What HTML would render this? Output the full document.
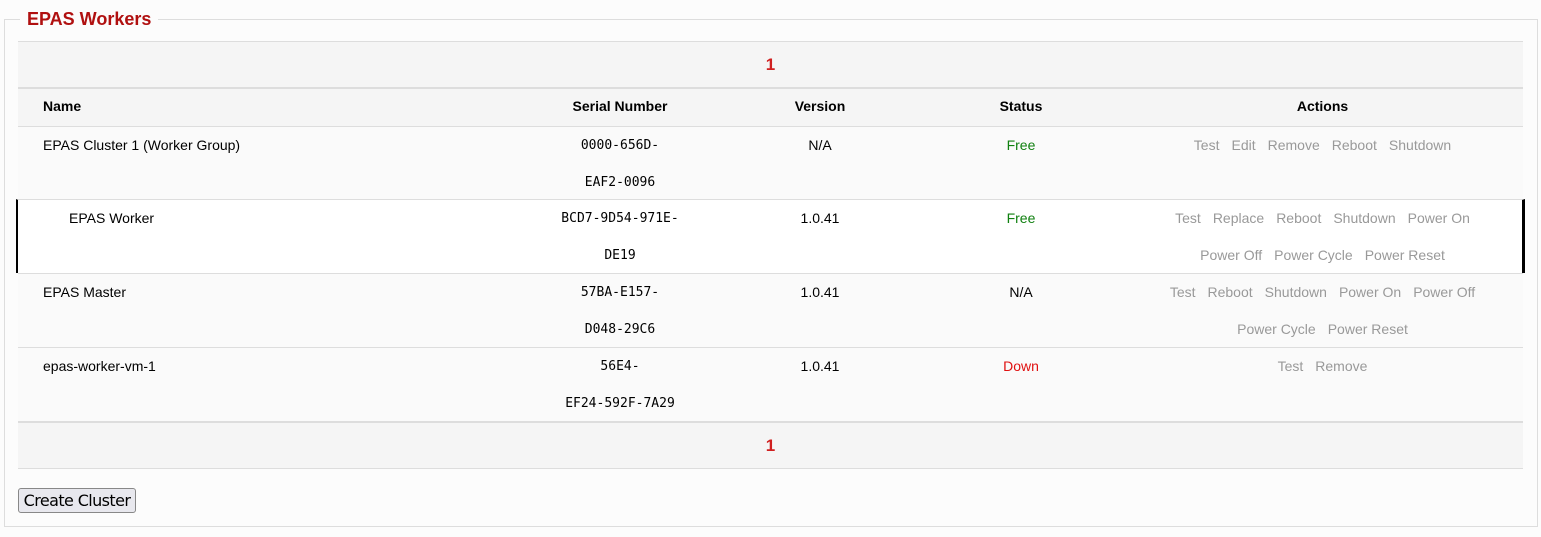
<!DOCTYPE html>
<html><head><style>
body{margin:0;background:#fcfcfc;font-family:"Liberation Sans",Arial,sans-serif;font-size:14px;color:#000;width:1541px;height:537px;position:relative;overflow:hidden}
.fs{position:absolute;left:4px;top:19px;width:1534px;height:508px;border:1px solid #ddd;box-sizing:border-box;background:#fcfcfc}
.lg{position:absolute;left:20px;top:9px;padding:0 7px;background:#fcfcfc;color:#b01010;font-weight:bold;font-size:18px;line-height:21px}
.r{position:absolute;left:18px;width:1505px;box-sizing:border-box}
.c{position:absolute;text-align:center;line-height:37px;top:0}
.mono{font-family:"DejaVu Sans Mono","Liberation Mono",monospace;font-size:13px}
.a{color:#999}
.a span{margin:0 6px}
.pg{color:#d02020;font-weight:bold;font-size:17px;text-align:center;line-height:46px}
</style></head><body>
<div class="fs"></div>
<div class="lg">EPAS Workers</div>

<div class="r pg" style="top:41px;height:47px;background:#f5f5f5;border-top:1px solid #ddd">1</div>
<div class="r" style="top:87px;height:39px;background:#f5f5f5;border-top:2px solid #ddd;font-weight:bold">
 <div class="c" style="left:25px;line-height:35px">Name</div>
 <div class="c" style="left:502px;width:200px;line-height:35px">Serial Number</div>
 <div class="c" style="left:702px;width:200px;line-height:35px">Version</div>
 <div class="c" style="left:902px;width:202px;line-height:35px">Status</div>
 <div class="c" style="left:1104px;width:401px;line-height:35px">Actions</div>
</div>

<div class="r" style="top:126px;height:73px;background:#fafafa;border-top:1px solid #ddd">
 <div class="c" style="left:25px">EPAS Cluster 1 (Worker Group)</div>
 <div class="c mono" style="left:502px;width:200px">0000-656D-<br>EAF2-0096</div>
 <div class="c" style="left:702px;width:200px">N/A</div>
 <div class="c" style="left:902px;width:202px;color:#108010">Free</div>
 <div class="c a" style="left:1104px;width:401px"><span>Test</span><span>Edit</span><span>Remove</span><span>Reboot</span><span>Shutdown</span></div>
</div>

<div class="r" style="top:199px;height:74px;background:#fff;border-top:1px solid #ddd;border-left:2px solid #000;border-right:3px solid #000;left:16px;width:1509px">
 <div class="c" style="left:51px">EPAS Worker</div>
 <div class="c mono" style="left:502px;width:200px">BCD7-9D54-971E-<br>DE19</div>
 <div class="c" style="left:702px;width:200px">1.0.41</div>
 <div class="c" style="left:902px;width:202px;color:#108010">Free</div>
 <div class="c a" style="left:1104px;width:401px"><span>Test</span><span>Replace</span><span>Reboot</span><span>Shutdown</span><span>Power On</span><br><span>Power Off</span><span>Power Cycle</span><span>Power Reset</span></div>
</div>

<div class="r" style="top:273px;height:74px;background:#fafafa;border-top:1px solid #ddd">
 <div class="c" style="left:25px">EPAS Master</div>
 <div class="c mono" style="left:502px;width:200px">57BA-E157-<br>D048-29C6</div>
 <div class="c" style="left:702px;width:200px">1.0.41</div>
 <div class="c" style="left:902px;width:202px">N/A</div>
 <div class="c a" style="left:1104px;width:401px"><span>Test</span><span>Reboot</span><span>Shutdown</span><span>Power On</span><span>Power Off</span><br><span>Power Cycle</span><span>Power Reset</span></div>
</div>

<div class="r" style="top:347px;height:74px;background:#fafafa;border-top:1px solid #ddd">
 <div class="c" style="left:25px">epas-worker-vm-1</div>
 <div class="c mono" style="left:502px;width:200px">56E4-<br>EF24-592F-7A29</div>
 <div class="c" style="left:702px;width:200px">1.0.41</div>
 <div class="c" style="left:902px;width:202px;color:#e01010">Down</div>
 <div class="c a" style="left:1104px;width:401px"><span>Test</span><span>Remove</span></div>
</div>

<div class="r pg" style="top:421px;height:48px;background:#f5f5f5;border-top:2px solid #ddd;border-bottom:1px solid #ddd">1</div>

<div style="position:absolute;left:18px;top:488px;width:118px;height:25px;box-sizing:border-box;border:1px solid #888;border-radius:3px;background:#e8e8ee;font-size:16px;text-align:center;line-height:23px;font-family:'DejaVu Sans','Liberation Sans',sans-serif;letter-spacing:-0.6px">Create Cluster</div>
</body></html>
